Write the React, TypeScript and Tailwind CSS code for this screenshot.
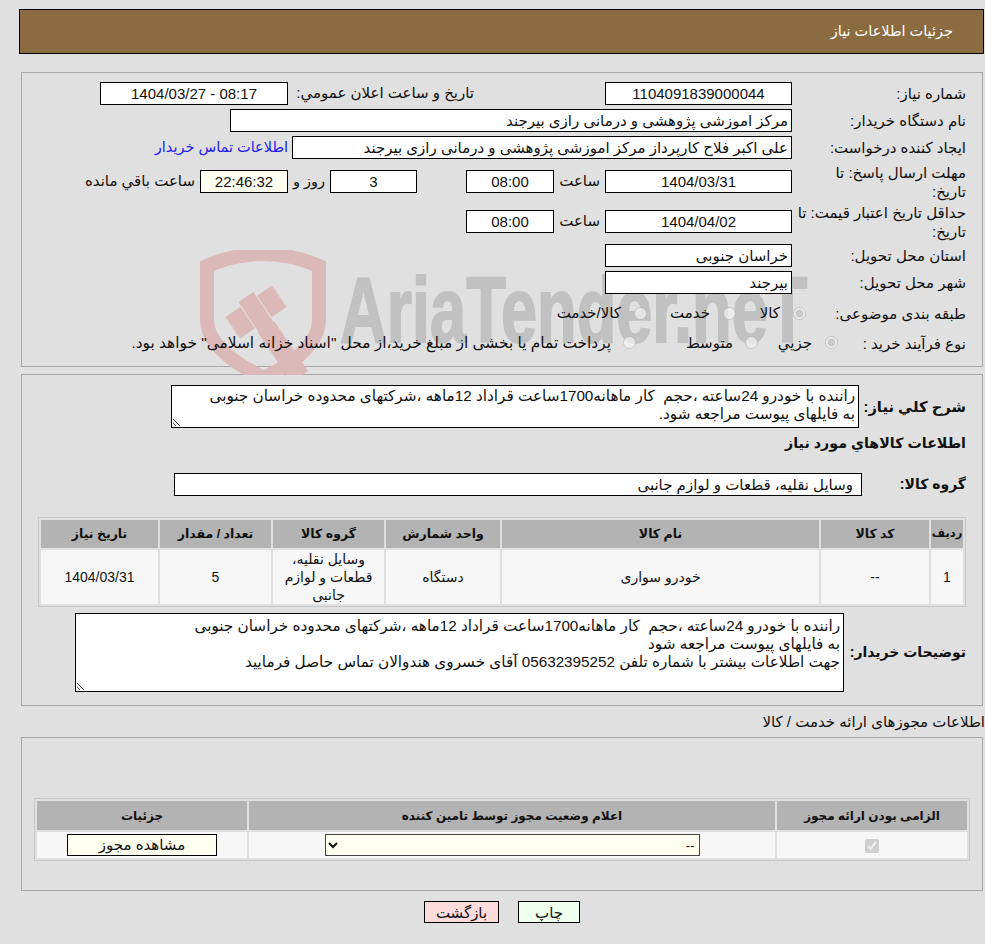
const boxClass = 'h-[23px] border border-black bg-white flex items-center shrink-0 px-[3px] text-[15px] leading-none';

const Label = ({ children }: { children: React.ReactNode }) => (
  <div className="w-[174px] shrink-0 text-[15px] leading-[19px] text-[#111]">{children}</div>
);

const Watermark = () => (
  <div className="absolute left-[178px] top-[177px] w-[640px] h-[125px] pointer-events-none" dir="ltr">
    <svg width="130" height="125" viewBox="0 0 130 125" className="absolute left-0 top-0">
      <path d="M7 16 Q63 -8 119 16 V70 Q119 100 64 128 Q7 100 7 70 Z" fill="none" stroke="#dcb9b9" strokeWidth="14" />
      <g fill="#dcb9b9" transform="rotate(-34 56 62)">
        <rect x="28" y="49" width="18" height="26" />
        <rect x="47" y="44" width="18" height="36" />
        <rect x="66" y="49" width="18" height="26" />
        <rect x="46" y="80" width="20" height="60" />
      </g>
    </svg>
    <div className="absolute left-[140px] top-[14px] origin-left scale-x-[0.705] whitespace-nowrap font-['Liberation_Sans',sans-serif] font-bold text-[92px] leading-none text-[#c1c1c1] [-webkit-text-stroke:2px_#c1c1c1]">
      AriaTender.neT
    </div>
  </div>
);

const Radio = ({ checked }: { checked?: boolean }) => (
  <input type="radio" disabled checked={checked} readOnly className="w-[13px] h-[13px] shrink-0 m-0" />
);

const Sheet = () => (
  <div className="relative z-10">
    <div className="flex h-[23px] mt-[9px] items-center">
      <Label>شماره نیاز:</Label>
      <div className={boxClass + ' w-[187px] justify-center'}>1104091839000044</div>
      <div className="mr-[131px] w-[181px] text-[15px]">تاریخ و ساعت اعلان عمومي:</div>
      <div className={boxClass + ' w-[188px] justify-center mr-[5px]'}>
        <span dir="ltr">1404/03/27 - 08:17</span>
      </div>
    </div>
    <div className="flex h-[23px] mt-[4px] items-center">
      <Label>نام دستگاه خریدار:</Label>
      <div className={boxClass + ' w-[562px]'}>مرکز اموزشی پژوهشی و درمانی رازی بیرجند</div>
    </div>
    <div className="flex h-[23px] mt-[4px] items-center">
      <Label>ایجاد کننده درخواست:</Label>
      <div className={boxClass + ' w-[500px]'}>علی اکبر فلاح کارپرداز مرکز اموزشی پژوهشی و درمانی رازی بیرجند</div>
      <div className="mr-[4px] text-[14.5px] text-[#2020ee]">اطلاعات تماس خریدار</div>
    </div>
    <div className="flex h-[23px] mt-[11px] items-center">
      <Label>
        مهلت ارسال پاسخ: تا
        <br />
        تاریخ:
      </Label>
      <div className={boxClass + ' w-[187px] justify-center'}>1404/03/31</div>
      <div className="w-[51px] pr-[5px] text-[15px]">ساعت</div>
      <div className={boxClass + ' w-[88px] justify-center'}>08:00</div>
      <div className={boxClass + ' w-[87px] justify-center mr-[49px]'}>3</div>
      <div className="w-[42px] pr-[5px] text-[14.5px]">روز و</div>
      <div className={boxClass + ' w-[88px] justify-center !bg-[#fffff0]'}>22:46:32</div>
      <div className="mr-[5px] text-[15px]">ساعت باقي مانده</div>
    </div>
    <div className="flex h-[23px] mt-[17px] items-center">
      <Label>
        حداقل تاریخ اعتبار قیمت: تا
        <br />
        تاریخ:
      </Label>
      <div className={boxClass + ' w-[187px] justify-center'}>1404/04/02</div>
      <div className="w-[51px] pr-[5px] text-[15px]">ساعت</div>
      <div className={boxClass + ' w-[88px] justify-center'}>08:00</div>
    </div>
    <div className="flex h-[23px] mt-[11px] items-center">
      <Label>استان محل تحویل:</Label>
      <div className={boxClass + ' w-[187px]'}>خراسان جنوبی</div>
    </div>
    <div className="flex h-[23px] mt-[4px] items-center">
      <Label>شهر محل تحویل:</Label>
      <div className={boxClass + ' w-[187px]'}>بیرجند</div>
    </div>
    <div className="flex h-[24px] mt-[7px] items-center text-[15px]">
      <Label>طبقه بندی موضوعی:</Label>
      <div className="flex items-center -mr-[14px]">
        <Radio checked />
        <span className="mr-[13px] w-[44px]">کالا</span>
        <Radio />
        <span className="mr-[13px] w-[63px]">خدمت</span>
        <Radio />
        <span className="mr-[13px] whitespace-nowrap">کالا/خدمت</span>
      </div>
    </div>
    <div className="flex h-[24px] mt-[6px] items-center text-[15px]">
      <Label>نوع فرآیند خرید :</Label>
      <div className="flex items-center -mr-[46px]">
        <Radio checked />
        <span className="mr-[13px] w-[54px]">جزيي</span>
        <Radio />
        <span className="mr-[12px] w-[97px]">متوسط</span>
        <Radio />
        <span className="mr-[12px] whitespace-nowrap text-[15.4px]">پرداخت تمام یا بخشی از مبلغ خرید،از محل "اسناد خزانه اسلامی" خواهد بود.</span>
      </div>
    </div>
  </div>
);

export default function App() {
  return (
    <div dir="rtl" className="min-h-[944px] bg-[#e0e0e0] overflow-hidden pt-[9px] font-['Liberation_Sans','DejaVu_Sans',sans-serif] text-[#111]">
      <div className="ml-[19px] mr-[1px] h-[45px] bg-[#8b6b40] border border-black flex items-center pr-[30px] text-[14.5px] text-white">
        جزئیات اطلاعات نیاز
      </div>

      {/* مشخصات نیاز */}
      <div className="relative ml-[21px] mr-[2px] mt-[18px] h-[295px] border border-[#a8a8a8] pr-[16px]">
        <Watermark />
        <Sheet />
      </div>

      {/* کالاها */}
      <div className="ml-[21px] mr-[2px] mt-[7px] h-[332px] border border-[#a8a8a8] pr-[16px]">
        <div className="flex items-start mt-[10px]">
          <div className="w-[107px] shrink-0 mt-[11px] font-bold text-[14.75px] whitespace-nowrap">شرح کلي نياز:</div>
          <textarea
            readOnly
            defaultValue={'راننده با خودرو 24ساعته ،حجم  کار ماهانه1700ساعت قراداد 12ماهه ،شرکتهای محدوده خراسان جنوبی\nبه فایلهای پیوست مراجعه شود.'}
            className="w-[688px] h-[43px] border border-black bg-white px-[3px] pt-[1px] text-[15.25px] leading-[18px] resize outline-none rounded-none"
          />
        </div>
        <div className="mt-[5px] font-bold text-[14.25px] h-[20px]">اطلاعات کالاهاي مورد نياز</div>
        <div className="flex items-center mt-[20px]">
          <div className="w-[104px] shrink-0 font-bold text-[14px]">گروه کالا:</div>
          <div className={boxClass + ' w-[688px] !pr-[8px]'}>وسایل نقلیه، قطعات و لوازم جانبی</div>
        </div>
        <table className="mt-[21px] w-[928px] table-fixed border-separate border-spacing-[2px] border border-[#c8c8c8] text-center text-[14px]">
          <colgroup>
            <col className="w-[32px]" />
            <col className="w-[108px]" />
            <col className="w-[317px]" />
            <col className="w-[114px]" />
            <col className="w-[111px]" />
            <col className="w-[111px]" />
            <col className="w-[117px]" />
          </colgroup>
          <thead>
            <tr className="h-[28px] bg-[#b3b3b3] font-bold text-[12.5px]">
              <th className="whitespace-nowrap text-[11.5px]">رديف</th>
              <th>کد کالا</th>
              <th>نام کالا</th>
              <th>واحد شمارش</th>
              <th>گروه کالا</th>
              <th>تعداد / مقدار</th>
              <th>تاریخ نیاز</th>
            </tr>
          </thead>
          <tbody>
            <tr className="h-[54px] bg-[#f7f7f7] leading-[18px]">
              <td>1</td>
              <td>--</td>
              <td>خودرو سواری</td>
              <td>دستگاه</td>
              <td>وسایل نقلیه، قطعات و لوازم جانبی</td>
              <td>5</td>
              <td>1404/03/31</td>
            </tr>
          </tbody>
        </table>
        <div className="flex items-center mt-[6px]">
          <div className="w-[122px] shrink-0 font-bold text-[14px] whitespace-nowrap">توضیحات خریدار:</div>
          <textarea
            readOnly
            defaultValue={'راننده با خودرو 24ساعته ،حجم  کار ماهانه1700ساعت قراداد 12ماهه ،شرکتهای محدوده خراسان جنوبی\nبه فایلهای پیوست مراجعه شود\nجهت اطلاعات بیشتر با شماره تلفن 05632395252 آقای خسروی هندوالان تماس حاصل فرمایید'}
            className="w-[769px] h-[79px] border border-black bg-white px-[3px] pt-[3px] text-[15.25px] leading-[18px] resize outline-none rounded-none"
          />
        </div>
      </div>

      <div className="mt-[7px] h-[18px] text-[15px] leading-[18px] whitespace-nowrap">اطلاعات مجوزهای ارائه خدمت / کالا</div>

      {/* مجوزها */}
      <div className="ml-[21px] mr-[2px] mt-[6px] h-[154px] border border-[#a8a8a8] pt-[60px] pr-[12px]">
        <table className="w-[933px] table-fixed border-separate border-spacing-[2px] border border-[#c8c8c8] text-center text-[13px]">
          <colgroup>
            <col className="w-[190px]" />
            <col className="w-[526px]" />
            <col className="w-[210px]" />
          </colgroup>
          <thead>
            <tr className="h-[29px] bg-[#b3b3b3] font-bold text-[12px]">
              <th>الزامی بودن ارائه مجوز</th>
              <th>اعلام وضعیت مجوز توسط تامین کننده</th>
              <th>جزئیات</th>
            </tr>
          </thead>
          <tbody>
            <tr className="h-[26px] bg-[#f7f7f7]">
              <td>
                <input type="checkbox" checked disabled readOnly className="w-[14px] h-[14px] align-middle" />
              </td>
              <td>
                <select className="w-[375px] h-[22px] border border-[#444] bg-[#fffff0] text-[13px] align-middle">
                  <option>--</option>
                </select>
              </td>
              <td>
                <div className="mx-auto w-[150px] h-[22px] border border-black bg-[#fffff0] flex items-center justify-center text-[15px]">
                  مشاهده مجوز
                </div>
              </td>
            </tr>
          </tbody>
        </table>
      </div>

      <div className="flex justify-center gap-[19px] mt-[10px] pl-[19px]">
        <button className="w-[62px] h-[22px] border border-black bg-[#eeffee] text-[15px]">چاپ</button>
        <button className="w-[75px] h-[22px] border border-black bg-[#ffdcdc] text-[15px]">بازگشت</button>
      </div>
    </div>
  );
}
